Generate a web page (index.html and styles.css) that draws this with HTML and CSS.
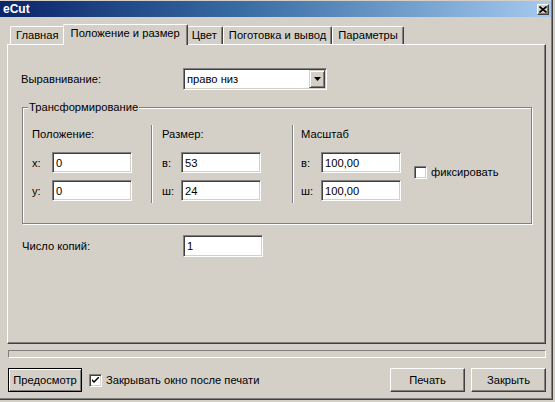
FILE: index.html
```html
<!DOCTYPE html>
<html lang="ru">
<head>
<meta charset="utf-8">
<title>eCut</title>
<link rel="stylesheet" href="styles.css">
</head>
<body>
<div class="window">
  <div class="titlebar">
    <span class="title">eCut</span>
    <span class="close-btn">
      <svg width="8" height="7" viewBox="0 0 8 7"><path d="M0.5 0.5 L7.5 6.5 M7.5 0.5 L0.5 6.5" stroke="#000" stroke-width="1.6" fill="none"/></svg>
    </span>
  </div>

  <div class="tabs">
    <div class="tab">Главная</div>
    <div class="tab active">Положение и размер</div>
    <div class="tab">Цвет</div>
    <div class="tab">Поготовка и вывод</div>
    <div class="tab">Параметры</div>
  </div>

  <div class="panel">
    <div class="row">
      <span class="row-label">Выравнивание:</span>
      <div class="combo">
        <span class="combo-text">право низ</span>
        <span class="combo-btn">
          <svg width="7" height="4" viewBox="0 0 7 4"><path d="M0 0 H7 L3.5 4 Z" fill="#000"/></svg>
        </span>
      </div>
    </div>

    <div class="group">
      <span class="legend">Трансформирование</span>
      <div class="col col1">
        <div class="col-head">Положение:</div>
        <div class="fields">
          <div class="field"><span class="flabel">x:</span><span class="input">0</span></div>
          <div class="field"><span class="flabel">y:</span><span class="input">0</span></div>
        </div>
      </div>
      <div class="col col2">
        <div class="col-head">Размер:</div>
        <div class="fields">
          <div class="field"><span class="flabel narrow">в:</span><span class="input">53</span></div>
          <div class="field"><span class="flabel narrow">ш:</span><span class="input">24</span></div>
        </div>
      </div>
      <div class="col col3">
        <div class="col-head">Масштаб</div>
        <div class="scale-body">
          <div class="fields">
            <div class="field"><span class="flabel">в:</span><span class="input">100,00</span></div>
            <div class="field"><span class="flabel">ш:</span><span class="input">100,00</span></div>
          </div>
          <label class="check fix">
            <span class="checkbox"></span>
            <span>фиксировать</span>
          </label>
        </div>
      </div>
    </div>

    <div class="row copies">
      <span class="row-label">Число копий:</span>
      <span class="input">1</span>
    </div>
  </div>

  <div class="progress"></div>

  <div class="footer">
    <button class="btn default">Предосмотр</button>
    <label class="check footer-check">
      <span class="checkbox checked">
        <svg width="7" height="7" viewBox="0 0 7 7"><path d="M0 2 L0 4 L2 6 L7 1 L7 -1 L2 4 Z" fill="#000"/></svg>
      </span>
      <span>Закрывать окно после печати</span>
    </label>
    <span class="spacer"></span>
    <button class="btn">Печать</button>
    <button class="btn">Закрыть</button>
  </div>
</div>
</body>
</html>
```

FILE: styles.css
```css
* { box-sizing: border-box; }

html, body {
  margin: 0;
  padding: 0;
}

body {
  width: 555px;
  height: 402px;
  overflow: hidden;
  background: #d4d0c8;
  color: #000;
  font-family: "Liberation Sans", Arial, sans-serif;
  font-size: 11.2px;
}

.window {
  width: 553px;
  height: 400px;
  display: flex;
  flex-direction: column;
  box-shadow: inset -1px -1px 0 #404040, inset -2px -2px 0 #808080;
}

/* title bar */
.titlebar {
  margin: 1px 2px 0 0;
  height: 16px;
  display: flex;
  align-items: center;
  justify-content: space-between;
  background: linear-gradient(to right, #0a246a 0%, #3a6ea5 45%, #a6caf0 100%);
}

.title {
  padding-left: 3px;
  color: #fff;
  font-weight: bold;
  font-size: 12px;
}

.close-btn {
  width: 12px;
  height: 11px;
  margin-right: 2px;
  display: flex;
  align-items: center;
  justify-content: center;
  background: #d4d0c8;
  border: 1px solid;
  border-color: #fff #404040 #404040 #fff;
  box-shadow: inset -1px -1px 0 #808080;
}

/* tabs */
.tabs {
  margin-top: 7px;
  height: 20px;
  padding-left: 10px;
  display: flex;
  align-items: flex-end;
}

.tab {
  height: 18px;
  padding: 0 5px;
  line-height: 16px;
  white-space: nowrap;
  border-top: 1px solid #fff;
  border-left: 1px solid #fff;
  border-right: 1px solid #404040;
  box-shadow: inset -1px 0 0 #808080;
  border-radius: 2px 2px 0 0;
}

.tab.active {
  position: relative;
  z-index: 1;
  height: 21px;
  margin: 0 -2px -1px -2px;
  padding: 0 7px;
  background: #d4d0c8;
}

/* panel */
.panel {
  margin-left: 7px;
  width: 539px;
  height: 300px;
  padding: 23px 0 0 13px;
  border: 1px solid;
  border-color: #fff #404040 #404040 #fff;
  box-shadow: inset -1px -1px 0 #808080;
  display: flex;
  flex-direction: column;
}

.row {
  display: flex;
  align-items: center;
  height: 22px;
}

.row-label {
  width: 162px;
}

.combo {
  width: 144px;
  height: 22px;
  display: flex;
  align-items: center;
  background: #fff;
  border: 1px solid;
  border-color: #808080 #fff #fff #808080;
  box-shadow: inset 1px 1px 0 #404040, inset -1px -1px 0 #d4d0c8;
  padding: 1px 1px 1px 2px;
}

.combo-text {
  flex: 1;
  padding-left: 1px;
}

.combo-btn {
  width: 16px;
  height: 18px;
  display: flex;
  align-items: center;
  justify-content: center;
  background: #d4d0c8;
  border: 1px solid;
  border-color: #d4d0c8 #404040 #404040 #d4d0c8;
  box-shadow: inset 1px 1px 0 #fff, inset -1px -1px 0 #808080;
}

/* group box */
.group {
  position: relative;
  margin: 17px 0 0 1px;
  width: 510px;
  height: 117px;
  padding-top: 17px;
  display: flex;
  border: 1px solid #808080;
  box-shadow: 1px 1px 0 #fff, inset 1px 1px 0 #fff;
}

.legend {
  position: absolute;
  top: -7px;
  left: 5px;
  padding: 0 1px;
  line-height: 13px;
  background: #d4d0c8;
}

.col {
  height: 78px;
  display: flex;
  flex-direction: column;
}

.col1 {
  width: 128px;
  padding-left: 9px;
}

.col2 {
  width: 141px;
  padding-left: 10px;
  border-left: 1px solid #808080;
  box-shadow: inset 1px 0 0 #fff;
}

.col3 {
  flex: 1;
  padding-left: 8px;
  border-left: 1px solid #808080;
  box-shadow: inset 1px 0 0 #fff;
}

.col-head {
  height: 18px;
  line-height: 18px;
}

.fields {
  margin-top: 9px;
  display: flex;
  flex-direction: column;
  gap: 7px;
}

.scale-body {
  display: flex;
  align-items: center;
}

.field {
  display: flex;
  align-items: center;
  height: 21px;
}

.flabel {
  width: 20px;
}

.flabel.narrow {
  width: 19px;
}

.input {
  width: 80px;
  height: 21px;
  display: flex;
  align-items: center;
  padding-left: 3px;
  background: #fff;
  border: 1px solid;
  border-color: #808080 #fff #fff #808080;
  box-shadow: inset 1px 1px 0 #404040, inset -1px -1px 0 #d4d0c8;
}

/* checkboxes */
.check {
  display: flex;
  align-items: center;
  gap: 4px;
  white-space: nowrap;
}

.fix {
  margin-left: 13px;
}

.checkbox {
  width: 13px;
  height: 13px;
  display: flex;
  align-items: center;
  justify-content: center;
  background: #fff;
  border: 1px solid;
  border-color: #808080 #fff #fff #808080;
  box-shadow: inset 1px 1px 0 #404040, inset -1px -1px 0 #d4d0c8;
}

.copies {
  margin-top: 11px;
}

.copies .row-label {
  width: 161px;
  margin-left: 1px;
}

.copies .input {
  height: 22px;
}

/* footer */
.progress {
  margin: 6px 0 0 8px;
  width: 538px;
  height: 8px;
  border: 1px solid;
  border-color: #808080 #fff #fff #808080;
}

.footer {
  margin-top: 10px;
  height: 24px;
  padding: 0 7px 0 8px;
  display: flex;
  align-items: center;
}

.btn {
  width: 75px;
  height: 24px;
  margin: 0;
  padding: 0;
  font-family: inherit;
  font-size: 11.2px;
  color: #000;
  background: #d4d0c8;
  border: 1px solid;
  border-color: #fff #404040 #404040 #fff;
  box-shadow: inset -1px -1px 0 #808080;
}

.btn.default {
  width: 74px;
  border-color: #000;
  box-shadow: inset 1px 1px 0 #fff, inset -1px -1px 0 #808080;
}

.footer-check {
  margin-left: 7px;
}

.spacer {
  flex: 1;
}

.btn + .btn {
  margin-left: 6px;
}
```
